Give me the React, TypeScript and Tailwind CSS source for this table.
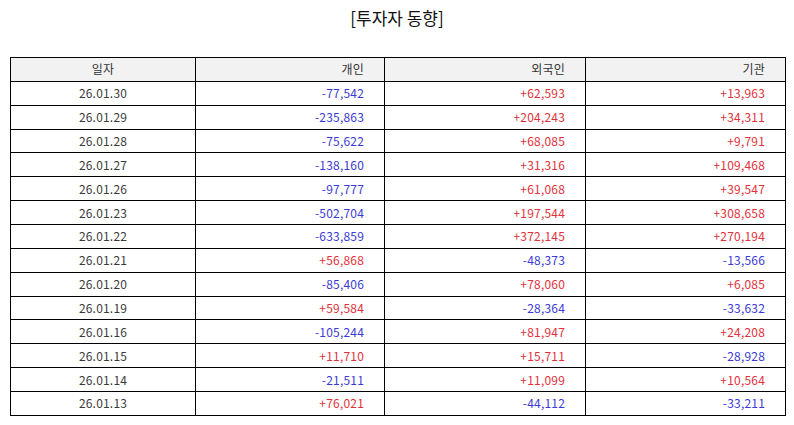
import React from "react";

const rows: [string, string, string, string][] = [
  ["26.01.30", "-77,542", "+62,593", "+13,963"],
  ["26.01.29", "-235,863", "+204,243", "+34,311"],
  ["26.01.28", "-75,622", "+68,085", "+9,791"],
  ["26.01.27", "-138,160", "+31,316", "+109,468"],
  ["26.01.26", "-97,777", "+61,068", "+39,547"],
  ["26.01.23", "-502,704", "+197,544", "+308,658"],
  ["26.01.22", "-633,859", "+372,145", "+270,194"],
  ["26.01.21", "+56,868", "-48,373", "-13,566"],
  ["26.01.20", "-85,406", "+78,060", "+6,085"],
  ["26.01.19", "+59,584", "-28,364", "-33,632"],
  ["26.01.16", "-105,244", "+81,947", "+24,208"],
  ["26.01.15", "+11,710", "+15,711", "-28,928"],
  ["26.01.14", "-21,511", "+11,099", "+10,564"],
  ["26.01.13", "+76,021", "-44,112", "-33,211"],
];

function Num({ v }: { v: string }) {
  const neg = v.startsWith("-");
  return (
    <div
      className={`h-[23.87px] border-r border-b border-black flex items-center justify-end pr-[20px] ${
        neg ? "text-[#3a3ad4]" : "text-[#e2303a]"
      }`}
    >
      {v}
    </div>
  );
}

export default function App() {
  return (
    <div
      className="w-[794px] h-[425px] bg-white"
      style={{ fontFamily: '"Noto Sans CJK KR", "Noto Sans", sans-serif' }}
    >
      <div className="h-[36px] flex items-center justify-center text-[17px] text-[#111]">
        [투자자 동향]
      </div>
      <div className="mt-[21px] pl-[10px] pr-[8px]">
        <div className="grid grid-cols-[185px_189px_201px_1fr] border-l border-t border-black text-[12px] leading-none tracking-[0.2px]">
          <div className="h-[23.87px] border-r border-b border-black bg-[#f2f2f2] flex items-center justify-center text-[#333]">
            일자
          </div>
          <div className="h-[23.87px] border-r border-b border-black bg-[#f2f2f2] flex items-center justify-end pr-[20px] text-[#333]">
            개인
          </div>
          <div className="h-[23.87px] border-r border-b border-black bg-[#f2f2f2] flex items-center justify-end pr-[20px] text-[#333]">
            외국인
          </div>
          <div className="h-[23.87px] border-r border-b border-black bg-[#f2f2f2] flex items-center justify-end pr-[20px] text-[#333]">
            기관
          </div>
          {rows.map((r) => (
            <React.Fragment key={r[0]}>
              <div className="h-[23.87px] border-r border-b border-black flex items-center justify-center text-[#3a3a3a]">
                {r[0]}
              </div>
              <Num v={r[1]} />
              <Num v={r[2]} />
              <Num v={r[3]} />
            </React.Fragment>
          ))}
        </div>
      </div>
    </div>
  );
}
